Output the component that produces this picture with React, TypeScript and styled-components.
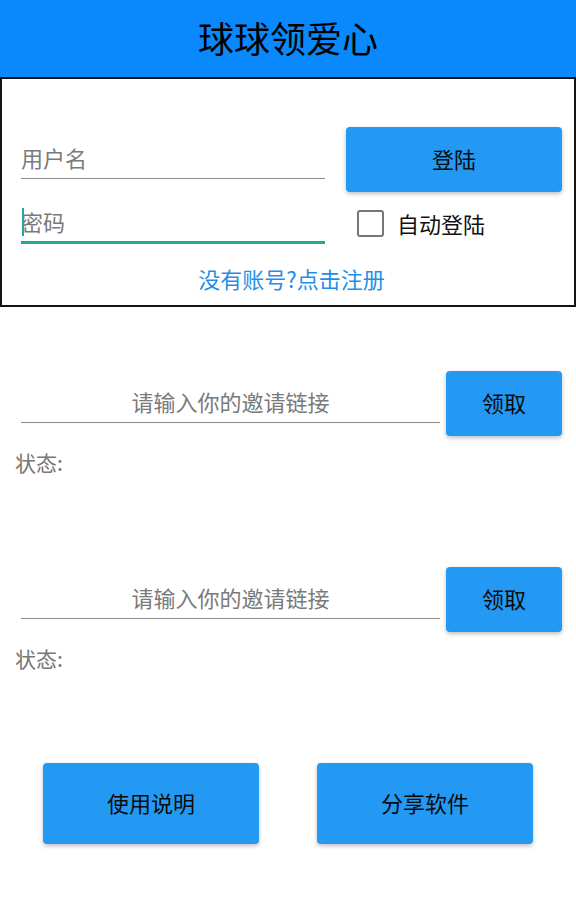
import styled, { createGlobalStyle } from "styled-components";

const GlobalStyle = createGlobalStyle`
  body {
    margin: 0;
    background: #fff;
    font-family: "Noto Sans CJK SC", "Noto Sans", sans-serif;
  }
  * {
    box-sizing: border-box;
  }
`;

const App = () => {
  return (
    <Page>
      <GlobalStyle />
      <Header>球球领爱心</Header>

      <LoginBox>
        <LoginGrid>
          <LineInput placeholder="用户名" />
          <BlueButton $height={65}>登陆</BlueButton>
          <PasswordWrap>
            <LineInput $focused type="password" placeholder="密码" />
          </PasswordWrap>
          <CheckRow>
            <CheckBox />
            <CheckLabel>自动登陆</CheckLabel>
          </CheckRow>
        </LoginGrid>
        <RegisterLink>没有账号?点击注册</RegisterLink>
      </LoginBox>

      {[0, 1].map((i) => (
        <InviteSection key={i}>
          <InviteRow>
            <LineInput $center placeholder="请输入你的邀请链接" />
            <BlueButton $height={65}>领取</BlueButton>
          </InviteRow>
          <Status>状态:</Status>
        </InviteSection>
      ))}

      <BottomBar>
        <BlueButton $height={81}>使用说明</BlueButton>
        <BlueButton $height={81}>分享软件</BlueButton>
      </BottomBar>
    </Page>
  );
};

export default App;

const Page = styled.div`
  width: 576px;
  min-height: 923px;
`;

const Header = styled.div`
  height: 77px;
  background: #0a89fc;
  color: #000;
  font-size: 36px;
  line-height: 75px;
  text-align: center;
`;

const LoginBox = styled.div`
  height: 230px;
  border: 2px solid #141414;
  padding: 48px 12px 0 19px;
`;

const LoginGrid = styled.div`
  display: grid;
  grid-template-columns: 304px 216px;
  grid-template-rows: 65px 52px;
  column-gap: 21px;
`;

const LineInput = styled.input<{ $focused?: boolean; $center?: boolean }>`
  align-self: end;
  width: 100%;
  height: 40px;
  margin: 0 0 ${(p) => (p.$focused ? 0 : 13)}px;
  padding: 0 0 4px;
  border: none;
  border-bottom: ${(p) => (p.$focused ? "3px solid #26a69a" : "1.5px solid #8a8a8a")};
  outline: none;
  background: transparent;
  font-family: inherit;
  font-size: 22px;
  text-align: ${(p) => (p.$center ? "center" : "left")};
  color: #222;

  &::placeholder {
    color: #7a7a7a;
  }
`;

const PasswordWrap = styled.div`
  position: relative;
  display: flex;
  align-items: flex-end;

  &::before {
    content: "";
    position: absolute;
    left: 1px;
    bottom: 8px;
    width: 2px;
    height: 28px;
    background: #26a69a;
  }
`;

const BlueButton = styled.div<{ $height: number }>`
  height: ${(p) => p.$height}px;
  display: flex;
  align-items: center;
  justify-content: center;
  padding-bottom: 3px;
  background: #2399f4;
  border-radius: 4px;
  box-shadow: 0 2px 4px rgba(0, 0, 0, 0.25);
  color: #0b0b0b;
  font-size: 22px;
  cursor: pointer;
`;

const CheckRow = styled.div`
  display: flex;
  align-items: center;
  gap: 13px;
  padding: 10px 0 0 11px;
`;

const CheckBox = styled.div`
  width: 27px;
  height: 27px;
  border: 2.5px solid #767676;
  border-radius: 3px;
`;

const CheckLabel = styled.span`
  font-size: 22px;
  color: #111;
`;

const RegisterLink = styled.div`
  margin-top: 19px;
  line-height: 30px;
  text-align: center;
  font-size: 22px;
  color: #1e8fe8;
  cursor: pointer;
`;

const InviteSection = styled.div`
  padding: 64px 14px 0 15px;

  & + & {
    padding-top: 90px;
  }
`;

const InviteRow = styled.div`
  display: grid;
  grid-template-columns: 419px 116px;
  column-gap: 6px;
  padding-left: 6px;
`;

const Status = styled.div`
  margin-top: 11px;
  line-height: 30px;
  font-size: 21px;
  color: #777;
`;

const BottomBar = styled.div`
  display: grid;
  grid-template-columns: 216px 216px;
  column-gap: 58px;
  justify-content: center;
  padding-top: 90px;
`;
